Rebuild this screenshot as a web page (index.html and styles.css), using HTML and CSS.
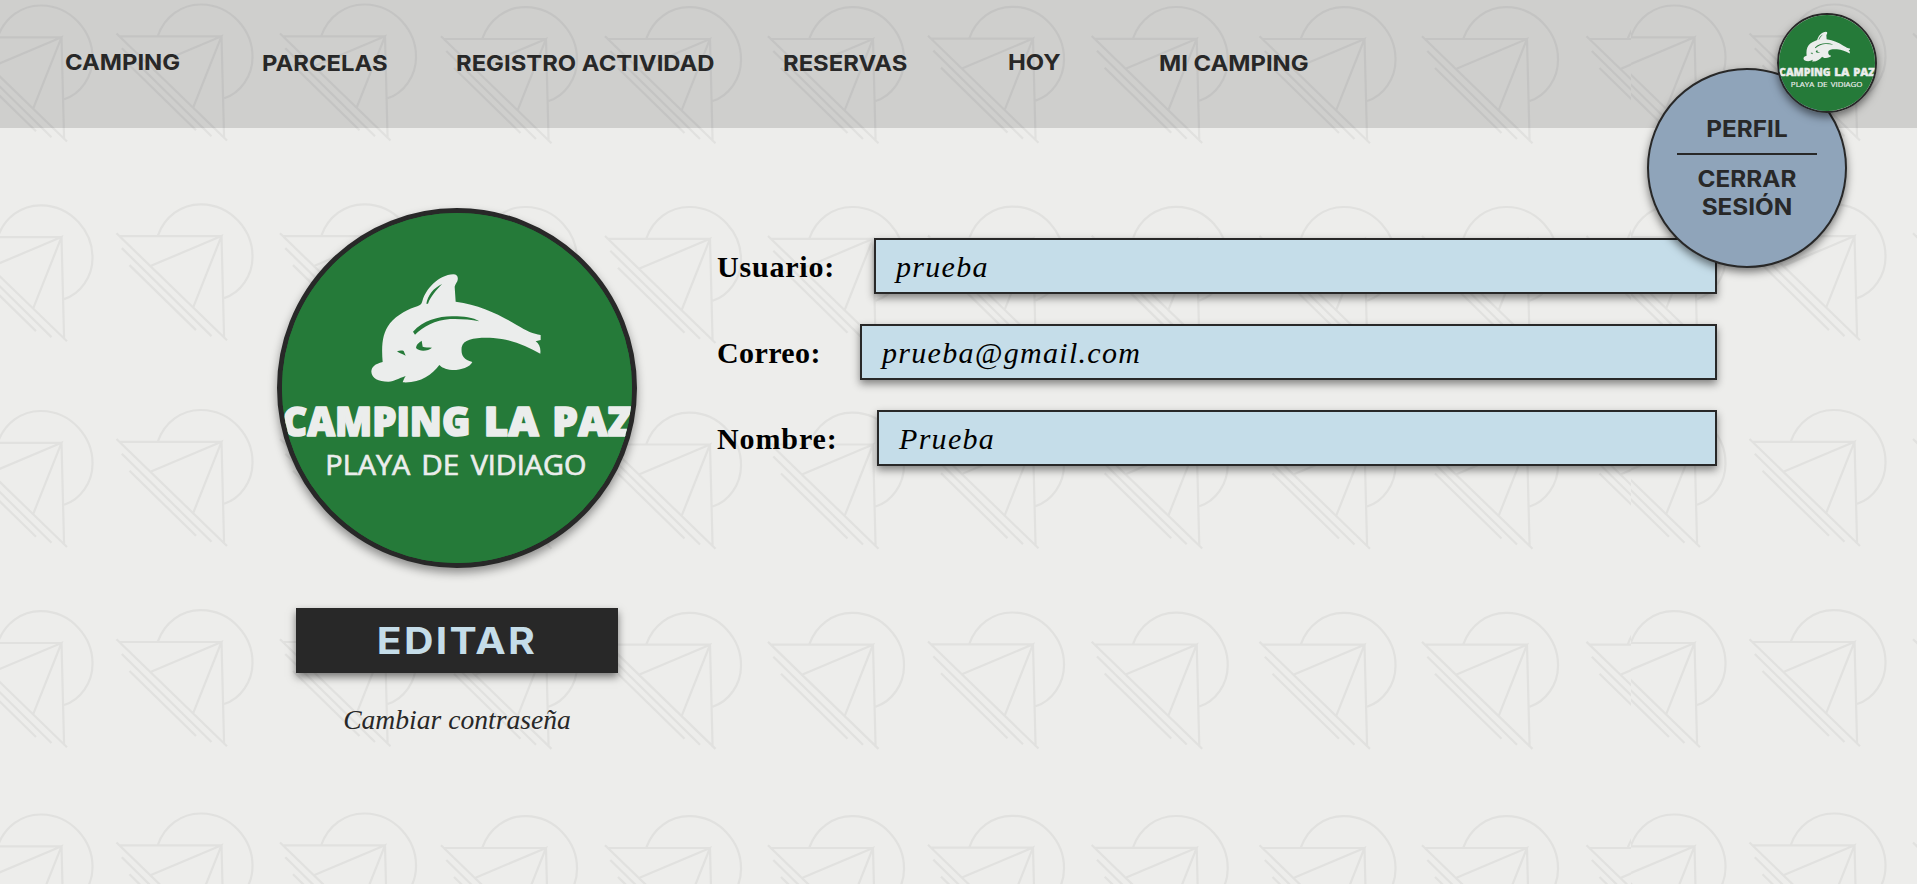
FILE: index.html
```html
<!DOCTYPE html>
<html lang="es">
<head>
<meta charset="utf-8">
<title>Camping La Paz - Perfil</title>
<link rel="stylesheet" href="styles.css">
</head>
<body>
<svg class="backdrop" width="1917" height="884" aria-hidden="true">
  <defs>
    <g id="motif">
      <path d="M-102 .3H0L2.6 102.5M-105-2.5 5.5 104.5M-70.5 30 0 .3-28.5 72M-99.7 12.3-10 100.3M-92 29.3-25.5 94.3M-63.7 0C-57-19-40-32-20-31.5C10-31 31.5-5 31 21.5C31 40 19 57 2.6 62.3"/>
    </g>
    <g id="row">
      <use href="#motif" x="61.5" y="1"/><use href="#motif" x="221.5" y="0"/><use href="#motif" x="385" y="0"/>
      <use href="#motif" x="546" y="2.7"/><use href="#motif" x="710" y="2.7"/><use href="#motif" x="873" y="2.7"/>
      <use href="#motif" x="1033" y="2.3"/><use href="#motif" x="1196.7" y="2.5"/><use href="#motif" x="1364.5" y="2.7"/>
      <use href="#motif" x="1527" y="2.7"/>
      <g clip-path="url(#seam-left)"><use href="#motif" x="1691.5" y="2.7"/></g>
      <g clip-path="url(#seam-right)"><use href="#motif" x="1694.5" y="1"/></g>
      <use href="#motif" x="1854.5" y="0"/><use href="#motif" x="2018" y="0"/>
    </g>
    <clipPath id="seam-left"><rect x="1560" y="-60" width="71" height="190"/></clipPath>
    <clipPath id="seam-right"><rect x="1631" y="-60" width="120" height="190"/></clipPath>
    <symbol id="logo" viewBox="0 0 350 350">
      <rect width="350" height="350" fill="#257a39"/>
      <g transform="translate(-22 -23) scale(.33333)" fill="#ebedec">
        <g transform="translate(300 210)">
          <path d="M280 43C292 43 296 52 292 64C288 70 286 74 284 80L287 125C360 134 420 165 470 195C500 213 520 222 542 225L542 240L527 244C537 252 543 262 541 281C500 258 450 237 400 234C350 232 310 236 305 262C303 285 308 298 337 306C330 322 300 331 276 330C255 328 245 322 238 315C215 345 180 370 128 367C130 362 132 355 137 348C115 355 105 364 85 365C55 365 35 355 34 335C35 320 45 312 68 306C64 260 66 220 90 190C110 165 150 145 172 139C182 135 185 132 188 120C198 88 235 45 280 43Z"/>
          <path fill="#257a39" d="M199 131C203 107 220 84 246 72C230 90 212 108 204 131ZM165 224L159 215C190 180 240 168 280 169C310 169 340 172 358 184C330 178 300 176 270 177C225 180 190 200 165 224ZM111 274C118 271 127 271 131 273L137 287C128 282 117 280 111 274ZM168 264C170 250 178 248 185 242L188 260C195 263 206 262 216 263C205 273 180 277 168 264Z"/>
        </g>
        <g class="logo-name">
          <text x="67" y="739" textLength="564" lengthAdjust="spacingAndGlyphs">CAMPING</text>
          <text x="671" y="739" textLength="165" lengthAdjust="spacingAndGlyphs">LA</text>
          <text x="877" y="739" textLength="240" lengthAdjust="spacingAndGlyphs">PAZ</text>
        </g>
        <g class="logo-place">
          <text x="196" y="854" textLength="255" lengthAdjust="spacingAndGlyphs">PLAYA</text>
          <text x="484" y="854" textLength="114" lengthAdjust="spacingAndGlyphs">DE</text>
          <text x="632" y="854" textLength="347" lengthAdjust="spacingAndGlyphs">VIDIAGO</text>
        </g>
      </g>
    </symbol>
  </defs>
  <use href="#row" y="36"/><use href="#row" y="235.8"/><use href="#row" y="441.5"/><use href="#row" y="641.7"/><use href="#row" y="845"/>
</svg>

<header class="topbar">
  <nav class="nav">
    <a class="nav-raised">CAMPING</a>
    <a>PARCELAS</a>
    <a>REGISTRO ACTIVIDAD</a>
    <a>RESERVAS</a>
    <a class="nav-raised">HOY</a>
    <a>MI CAMPING</a>
  </nav>
  <div class="account-menu">
    <a>PERFIL</a>
    <hr>
    <a>CERRAR<br>SESIÓN</a>
  </div>
  <svg class="account-avatar"><use href="#logo"/></svg>
</header>

<main class="profile">
  <section class="identity">
    <div class="avatar"><svg width="350" height="350"><use href="#logo"/></svg></div>
    <button class="edit"><span>EDITAR</span></button>
    <a class="password">Cambiar contraseña</a>
  </section>
  <section class="fields">
    <div class="field"><label class="l-user">Usuario:</label><div class="value">prueba</div></div>
    <div class="field"><label class="l-mail">Correo:</label><div class="value">prueba@gmail.com</div></div>
    <div class="field"><label class="l-name">Nombre:</label><div class="value">Prueba</div></div>
  </section>
</main>
</body>
</html>
```
FILE: styles.css
```css
* { box-sizing: border-box; }
body {
  margin: 0;
  height: 884px;
  overflow: hidden;
  position: relative;
  background: #ededeb;
  color: #282828;
}
.backdrop {
  position: absolute;
  inset: 0;
  z-index: -1;
  fill: none;
  stroke: #e1e1df;
  stroke-width: 2.2;
}
.logo-name {
  font: 800 122px "Open Sans", sans-serif;
  stroke: #ebedec;
  stroke-width: 5;
  stroke-linejoin: round;
}
.logo-place {
  font: 500 80px "Open Sans", sans-serif;
  stroke: #ebedec;
  stroke-width: 2;
}

.topbar {
  position: relative;
  z-index: 2;
  height: 128px;
  background: rgba(0, 0, 0, .125);
  font-family: Inter, sans-serif;
  font-weight: 700;
}
.nav {
  display: grid;
  grid-template-columns: 197px 194px 327px 225px 151px 200px;
  padding: 49px 0 0 65px;
  font-size: 22px;
  line-height: 28px;
  white-space: nowrap;
}
.nav a {
  transform: scaleX(1.083);
  transform-origin: 0 50%;
}
.nav-raised { margin-top: -1px; }
.account-menu {
  position: absolute;
  left: 1647px;
  top: 68px;
  width: 200px;
  height: 200px;
  padding-top: 45px;
  border: 2px solid #282828;
  border-radius: 50%;
  background: #8fa4ba;
  box-shadow: 0 4px 8px rgba(0, 0, 0, .5);
  text-align: center;
  font-size: 22.5px;
  line-height: 28px;
}
.account-menu a {
  display: block;
  transform: scaleX(1.08);
}
.account-menu hr {
  width: 140px;
  height: 2px;
  margin: 10px auto;
  border: 0;
  background: #282828;
}
.account-avatar {
  position: absolute;
  left: 1777px;
  top: 13px;
  width: 100px;
  height: 100px;
  border: 2px solid #282828;
  border-radius: 50%;
  box-shadow: 0 4px 8px rgba(0, 0, 0, .5);
}

.profile {
  display: grid;
  grid-template-columns: 360px 1000px;
  column-gap: 80px;
  padding: 80px 0 0 277px;
}
.identity {
  display: flex;
  flex-direction: column;
  align-items: center;
}
.avatar {
  width: 360px;
  height: 360px;
  border: 5px solid #282828;
  border-radius: 50%;
  overflow: hidden;
  background: #257a39;
  box-shadow: 0 5px 10px rgba(0, 0, 0, .4);
}
.avatar svg { display: block; }
.edit {
  width: 322px;
  height: 65px;
  margin-top: 40px;
  padding: 2px 0 0;
  border: 0;
  background: #282828;
  color: #c5dde9;
  font: 700 36.5px/63px Inter, sans-serif;
  letter-spacing: 2px;
  box-shadow: 0 4px 8px rgba(0, 0, 0, .5);
}
.edit span {
  display: block;
  transform: scaleX(1.12);
}
.password {
  margin-top: 30px;
  font: italic 27.6px/34px "Liberation Serif", serif;
  white-space: nowrap;
}
.fields {
  display: flex;
  flex-direction: column;
  gap: 30px;
  padding-top: 30px;
  color: #000;
}
.field { display: flex; height: 56px; }
.field label { font: 700 30px/58px "Liberation Serif", serif; }
.l-user { width: 157px; letter-spacing: .8px; }
.l-mail { width: 143px; letter-spacing: .4px; }
.l-name { width: 160px; letter-spacing: .9px; }
.value {
  flex: 1;
  padding-left: 20px;
  border: 2px solid #282828;
  background: #c5dde9;
  box-shadow: 0 4px 8px rgba(0, 0, 0, .45);
  font: italic 30px/54px "Liberation Serif", serif;
  letter-spacing: 1.3px;
}
```
